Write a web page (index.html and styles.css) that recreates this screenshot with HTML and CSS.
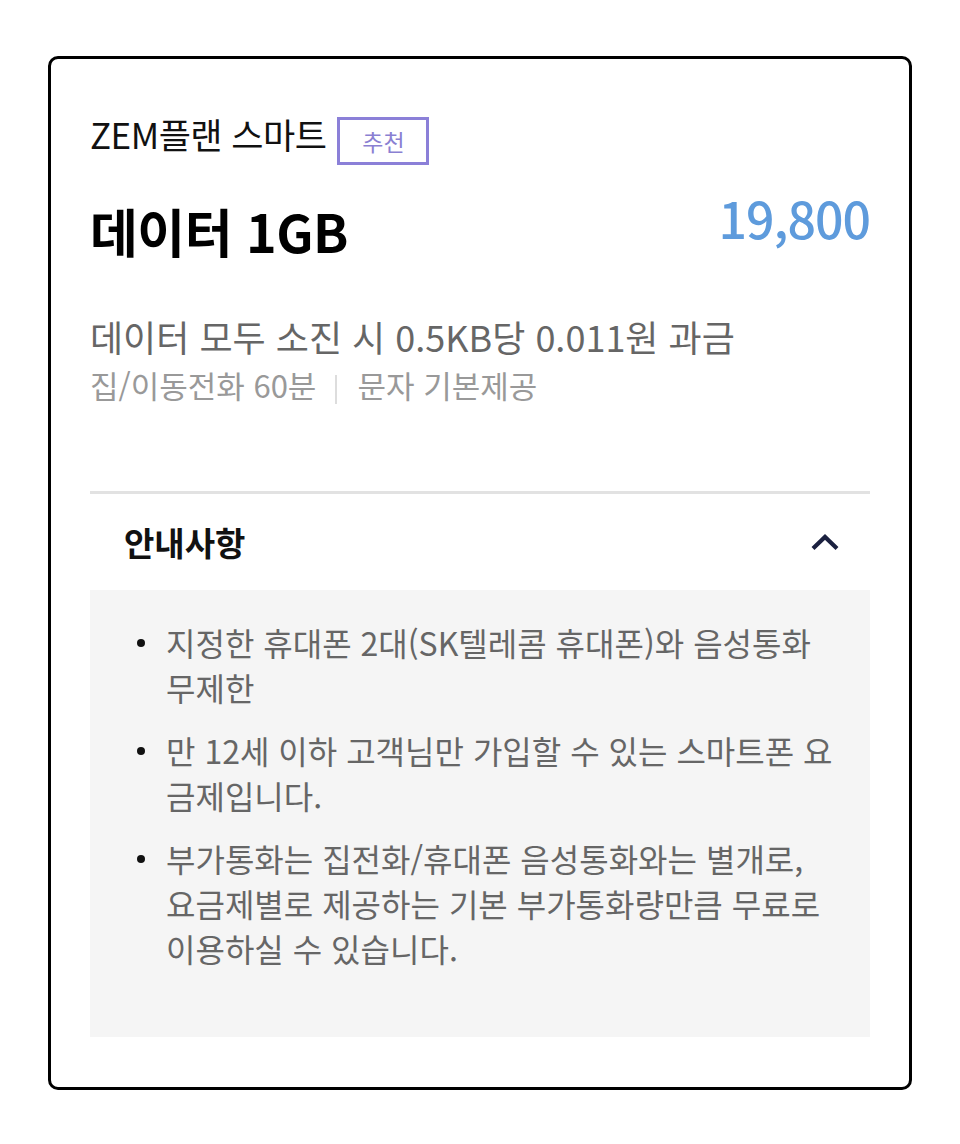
FILE: index.html
```html
<!DOCTYPE html>
<html lang="ko">
<head>
    <meta charset="UTF-8">
    <title>ZEM플랜 스마트</title>
    <link rel="stylesheet" href="styles.css">
</head>
<body>
    <div class="plan-card">
        <div class="plan-head">
            <span class="plan-name">ZEM플랜 스마트</span>
            <span class="badge">추천</span>
        </div>

        <div class="plan-main">
            <div class="plan-data">데이터 1GB</div>
            <div class="plan-price">19,800</div>
        </div>

        <div class="plan-desc">데이터 모두 소진 시 0.5KB당 0.011원 과금</div>
        <div class="plan-extra">
            <span>집/이동전화 60분</span>
            <span class="sep"></span>
            <span>문자 기본제공</span>
        </div>

        <div class="notice">
            <div class="notice-head">
                <span class="notice-title">안내사항</span>
                <svg class="chevron" width="30" height="18" viewBox="0 0 30 18">
                    <path d="M3 15.5 L15 4 L27 15.5" fill="none" stroke="#1b2140" stroke-width="4.2"/>
                </svg>
            </div>
            <ul class="notice-list">
                <li>지정한 휴대폰 2대(SK텔레콤 휴대폰)와 음성통화 무제한</li>
                <li>만 12세 이하 고객님만 가입할 수 있는 스마트폰 요금제입니다.</li>
                <li>부가통화는 집전화/휴대폰 음성통화와는 별개로, 요금제별로 제공하는 기본 부가통화량만큼 무료로 이용하실 수 있습니다.</li>
            </ul>
        </div>
    </div>
</body>
</html>
```

FILE: styles.css
```css
body {
    margin: 0;
    padding: 56px 48px 0;
    background: #fff;
    font-family: "Noto Sans CJK KR", "Noto Sans", sans-serif;
}
.plan-card {
    border: 3px solid #000;
    border-radius: 10px;
    padding: 58px 39px 50px;
}
.plan-head {
    display: flex;
    align-items: flex-start;
    gap: 11px;
}
.plan-name {
    font-size: 35px;
    line-height: 34px;
    color: #111;
    letter-spacing: -0.5px;
}
.badge {
    width: 92px;
    height: 48px;
    box-sizing: border-box;
    border: 3px solid #8b80d8;
    color: #8a80d2;
    font-size: 23px;
    display: flex;
    align-items: center;
    justify-content: center;
}
.plan-main {
    display: flex;
    justify-content: space-between;
    align-items: flex-start;
    margin-top: 36px;
}
.plan-data {
    font-size: 52px;
    font-weight: bold;
    color: #000;
    letter-spacing: -0.5px;
    line-height: 60px;
}
.plan-price {
    font-size: 50px;
    font-weight: 500;
    color: #5e9bdc;
    letter-spacing: -1px;
    line-height: 60px;
    margin-top: -14px;
}
.plan-desc {
    margin-top: 52px;
    font-size: 36px;
    color: #666;
    line-height: 46px;
}
.plan-extra {
    display: flex;
    align-items: center;
    margin-top: 5px;
    font-size: 31px;
    color: #999;
    line-height: 42px;
}
.sep {
    width: 2px;
    height: 29px;
    background: #ddd;
    margin: 8px 20px 0 19px;
}
.notice {
    margin-top: 85px;
    border-top: 3px solid #e2e2e2;
}
.notice-head {
    display: flex;
    justify-content: space-between;
    align-items: center;
    height: 96px;
    padding: 0 30px 0 34px;
}
.notice-title {
    font-size: 33px;
    font-weight: bold;
    color: #111;
}
.notice-list {
    margin: 0;
    list-style: none;
    background: #f5f5f5;
    padding: 30px 36px 66px 76px;
    font-size: 32px;
    color: #666;
    line-height: 45px;
}
.notice-list li {
    position: relative;
}
.notice-list li + li {
    margin-top: 18px;
}
.notice-list li::before {
    content: "";
    position: absolute;
    left: -29px;
    top: 19px;
    width: 8px;
    height: 8px;
    border-radius: 50%;
    background: #111;
}
```
